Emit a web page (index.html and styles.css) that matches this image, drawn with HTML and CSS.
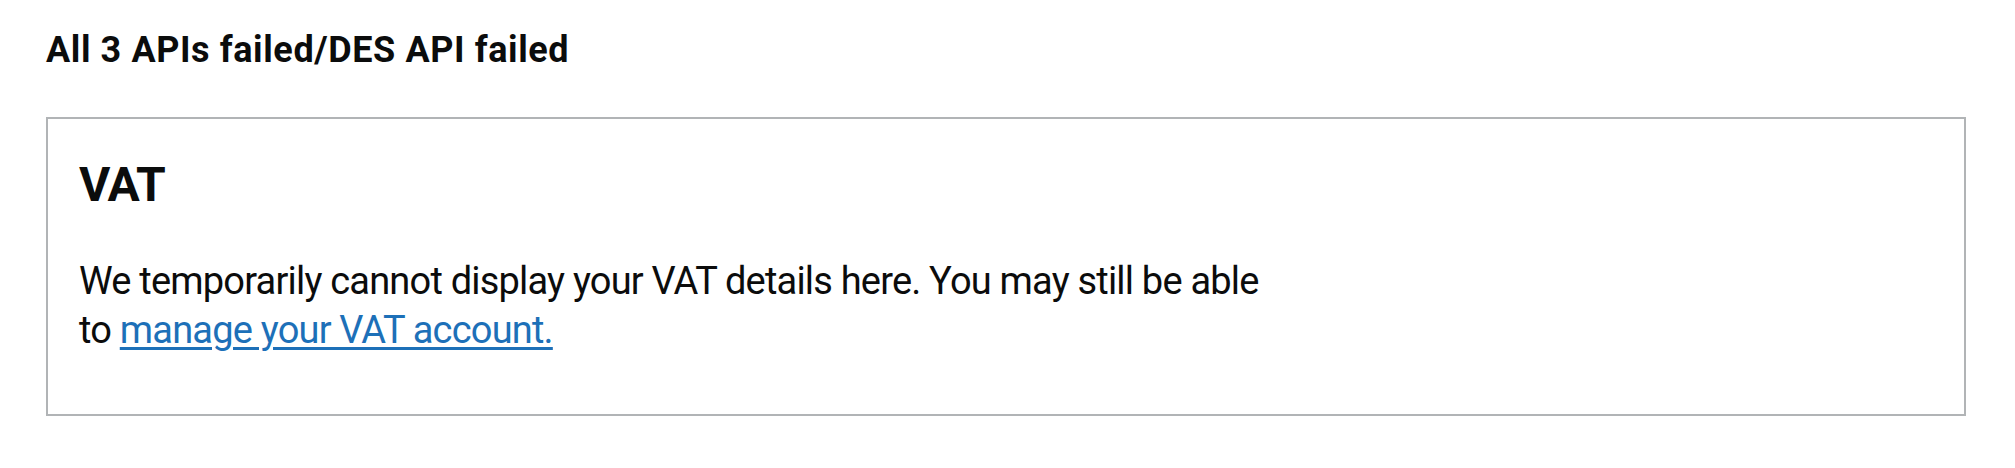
FILE: index.html
```html
<!DOCTYPE html>
<html lang="en">
<head>
<meta charset="utf-8">
<title>All 3 APIs failed/DES API failed</title>
<link rel="stylesheet" href="styles.css">
</head>
<body>
<main class="page">
  <h1 class="page-title">All 3 APIs failed/DES API failed</h1>
  <section class="card">
    <h2 class="card-title">VAT</h2>
    <p class="card-body">We temporarily cannot display your VAT details here. You may still be able<br>to <a class="link" href="#">manage your VAT account.</a></p>
  </section>
</main>
</body>
</html>
```
FILE: styles.css
```css
html, body {
  margin: 0;
  padding: 0;
  background: #ffffff;
}

body {
  font-family: "Roboto", "Liberation Sans", sans-serif;
  color: #0b0c0c;
}

.page {
  padding: 28px 49px 0 46px;
}

.page-title {
  margin: 0 0 45px 0;
  font-size: 36px;
  line-height: 44px;
  font-weight: 700;
  letter-spacing: 0.6px;
}

.card {
  border: 2px solid #b1b4b6;
  padding: 38px 31px 59px 31px;
}

.card-title {
  margin: 0 0 44px 0;
  font-size: 48px;
  line-height: 56px;
  font-weight: 700;
  letter-spacing: -1px;
}

.card-body {
  margin: 0;
  font-size: 38px;
  line-height: 49px;
  font-weight: 400;
  letter-spacing: -0.8px;
}

.link {
  color: #1d70b8;
  text-decoration: underline;
  text-decoration-thickness: 3px;
  text-underline-offset: 4px;
}
```
